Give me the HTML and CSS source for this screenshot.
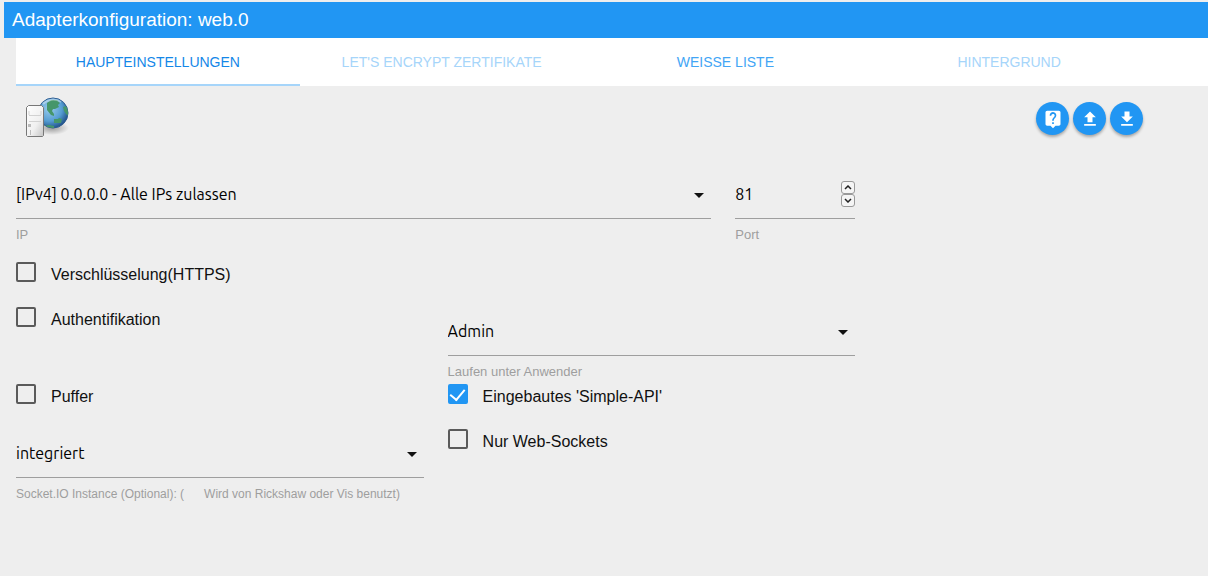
FILE: index.html
```
<!DOCTYPE html>
<html lang="de">
<head>
  <meta charset="UTF-8">
  <meta name="viewport" content="width=device-width, initial-scale=1.0">
  <title>Adapterkonfiguration: web.0</title>
  <link rel="stylesheet" href="styles.css">
</head>
<body>
  <header class="title-bar">
    <h1>Adapterkonfiguration: web.0</h1>
  </header>
  <nav class="tabs">
    <a class="tab active" href="#main">Haupteinstellungen</a>
    <a class="tab disabled" href="#le">Let's Encrypt Zertifikate</a>
    <a class="tab" href="#whitelist">Weisse Liste</a>
    <a class="tab disabled" href="#background">Hintergrund</a>
  </nav>
  <main class="page" id="main">
    <div class="toolbar">
      <svg class="logo" viewBox="0 0 48 48" width="48" height="48" role="img" aria-label="web">
        <defs>
          <radialGradient id="sea" cx="38%" cy="35%" r="70%">
            <stop offset="0" stop-color="#9accec"/>
            <stop offset="0.6" stop-color="#559dd2"/>
            <stop offset="1" stop-color="#1d4c85"/>
          </radialGradient>
          <radialGradient id="shade">
            <stop offset="0" stop-color="#000" stop-opacity="0.35"/>
            <stop offset="1" stop-color="#000" stop-opacity="0"/>
          </radialGradient>
          <linearGradient id="case" x1="0" y1="0" x2="1" y2="1">
            <stop offset="0" stop-color="#fff"/>
            <stop offset="0.6" stop-color="#f0f0f0"/>
            <stop offset="1" stop-color="#c4c4c4"/>
          </linearGradient>
          <clipPath id="globe"><circle cx="29" cy="18" r="15"/></clipPath>
        </defs>
        <ellipse cx="28" cy="33" rx="17" ry="7" fill="url(#shade)"/>
        <circle cx="29" cy="18" r="15" fill="url(#sea)" stroke="#2b5a90"/>
        <g clip-path="url(#globe)" fill="#46966a">
          <path d="M23 8l4-3 6 0 3 3-2 2 1 2-4 2-2 0-1 2 2 3 0 2-3-1-4-5z"/>
          <path d="M39 12l3-1 3 6-1 4-2-2-2-3z"/>
          <path d="M30 26v-2l4 0 1-1 3 1-1 4-3 0-4 0z"/>
          <path d="M20 31l5-1 5 1 0 2-4 1z"/>
        </g>
        <path d="M19 9a14 14 0 0 1 18-2" fill="none" stroke="#fff" stroke-opacity="0.4" stroke-width="2"/>
        <path d="M2.500 12.500l2-2h13l2 2v28l-1 1h-15l-1-1z" fill="url(#case)" stroke="#777"/>
        <path d="M5 20.500h12M5 26.500h12M5 16v4M17 16v4" fill="none" stroke="#d2d2d2"/>
        <path d="M4 29h3v3H4zM6 35h1v5H6z" fill="#bcbcbc"/>
      </svg>
      <div class="actions">
        <button type="button" class="btn-round" aria-label="Hilfe">
          <svg viewBox="0 0 24 24" width="20" height="20"><path fill="#fff" d="M19 2H5a2 2 0 0 0-2 2v14c0 1.100.9 2 2 2h4l3 3 3-3h4c1.100 0 2-.9 2-2V4a2 2 0 0 0-2-2zm-6 16h-2v-2h2v2zm2.070-7.750l-.9.920C13.450 11.900 13 12.500 13 14h-2v-.5c0-1.100.450-2.100 1.170-2.830l1.240-1.260A2 2 0 1 0 10 8H8a4 4 0 1 1 7.070 2.250z"/></svg>
        </button>
        <button type="button" class="btn-round" aria-label="Hochladen">
          <svg viewBox="0 0 24 24" width="20" height="20"><path fill="#fff" d="M9 16h6v-6h4l-7-7-7 7h4zM5 18h14v2H5z"/></svg>
        </button>
        <button type="button" class="btn-round" aria-label="Herunterladen">
          <svg viewBox="0 0 24 24" width="20" height="20"><path fill="#fff" d="M19 9h-4V3H9v6H5l7 7 7-7zM5 18v2h14v-2z"/></svg>
        </button>
      </div>
    </div>

    <form class="form">
      <div class="field ip">
        <div class="control">
          <select id="bind"><option>[IPv4] 0.0.0.0 - Alle IPs zulassen</option></select>
          <svg class="caret" viewBox="0 0 10 5" width="10" height="5"><path d="M0 0h10L5 5z"/></svg>
        </div>
        <label for="bind">IP</label>
      </div>
      <div class="field port">
        <div class="control">
          <input type="number" id="port" value="81">
          <div class="spinner">
            <button type="button" aria-label="Mehr"><svg viewBox="0 0 8 5" width="8" height="5"><path d="M1 4l3-3 3 3"/></svg></button>
            <button type="button" aria-label="Weniger"><svg viewBox="0 0 8 5" width="8" height="5"><path d="M1 1l3 3 3-3"/></svg></button>
          </div>
        </div>
        <label for="port">Port</label>
      </div>

      <label class="check full"><input type="checkbox"><span>Verschlüsselung(HTTPS)</span></label>

      <label class="check half"><input type="checkbox"><span>Authentifikation</span></label>
      <div class="field half">
        <div class="control">
          <select id="defaultUser"><option>Admin</option></select>
          <svg class="caret" viewBox="0 0 10 5" width="10" height="5"><path d="M0 0h10L5 5z"/></svg>
        </div>
        <label for="defaultUser">Laufen unter Anwender</label>
      </div>

      <label class="check half tight"><input type="checkbox"><span>Puffer</span></label>
      <label class="check half tight"><input type="checkbox" checked><span>Eingebautes 'Simple-API'</span></label>

      <div class="field half">
        <div class="control">
          <select id="socketio"><option>integriert</option></select>
          <svg class="caret" viewBox="0 0 10 5" width="10" height="5"><path d="M0 0h10L5 5z"/></svg>
        </div>
        <label for="socketio" class="small"><span>Socket.IO Instance (Optional): (</span><span>Wird von Rickshaw oder Vis benutzt)</span></label>
      </div>
      <label class="check half"><input type="checkbox"><span>Nur Web-Sockets</span></label>
    </form>
  </main>
</body>
</html>
```
FILE: styles.css
```
* {
  box-sizing: border-box;
}
body {
  margin: 0;
  padding-top: 2px;
  min-height: 100vh;
  background: #eee;
  color: #111;
  font-family: "Liberation Sans", Arial, sans-serif;
  font-size: 16px;
}
.title-bar {
  margin-left: 4px;
  padding: 0 8px;
  background: #2196f3;
}
.title-bar h1 {
  margin: 0;
  color: #fff;
  font-size: 19px;
  font-weight: 400;
  line-height: 36px;
}

/* tabs */
.tabs {
  display: flex;
  margin-left: 16px;
  padding-right: 57px;
  background: #fff;
}
.tab {
  flex: 1;
  height: 48px;
  color: #42a5f5;
  font-size: 14px;
  line-height: 48px;
  text-align: center;
  text-decoration: none;
  text-transform: uppercase;
}
.tab.active {
  color: #1487e8;
  border-bottom: 2px solid #a6d5fa;
}
.tab.disabled {
  color: #a6d5fa;
}

.page {
  padding: 0 58px 0 16px;
}
.toolbar {
  display: flex;
  justify-content: space-between;
  padding: 9px 7px 16px 8px;
}
.logo {
  display: block;
}
.actions {
  display: flex;
  gap: 4px;
  padding-top: 7px;
}
.btn-round {
  display: flex;
  align-items: center;
  justify-content: center;
  width: 33px;
  height: 33px;
  padding: 0;
  border: none;
  border-radius: 50%;
  background: #2196f3;
  box-shadow: 0 2px 3px rgba(0,0,0,0.3);
  cursor: pointer;
}

/* settings */
.form {
  display: grid;
  grid-template-columns: repeat(12, 1fr);
  column-gap: 24px;
  width: 74%;
}
.full {
  grid-column: span 12;
}
.half {
  grid-column: span 6;
}
.ip {
  grid-column: span 10;
  margin-bottom: 8px;
}
.port {
  grid-column: span 2;
}
.field {
  padding-top: 12px;
}
.control {
  display: flex;
  align-items: center;
  position: relative;
  height: 48px;
  border-bottom: 1px solid #9e9e9e;
}
.control select,
.control input {
  flex: 1;
  min-width: 0;
  height: 47px;
  padding: 0 0 2px;
  border: none;
  outline: none;
  background: transparent;
  appearance: none;
  color: #000;
  font-family: Ubuntu, "Noto Sans", sans-serif;
  font-size: 16px;
}
.control input {
  appearance: textfield;
}
.caret {
  position: absolute;
  top: 22px;
  right: 7px;
  pointer-events: none;
  fill: #111;
}
.spinner {
  display: flex;
  flex-direction: column;
  padding-bottom: 2px;
}
.spinner button {
  display: flex;
  align-items: center;
  justify-content: center;
  width: 14px;
  height: 13px;
  padding: 0;
  border: 1px solid #999;
  border-radius: 3px;
  background: #f5f5f5;
}
.spinner path {
  fill: none;
  stroke: #222;
  stroke-width: 1.5;
}
.field label {
  display: block;
  margin-top: 8px;
  color: #9e9e9e;
  font-size: 13px;
  line-height: 16px;
}
.field label.small {
  display: flex;
  gap: 20px;
  font-size: 12px;
}
.check {
  display: flex;
  gap: 15px;
  padding: 11px 0 14px;
  line-height: 26px;
}
.check span {
  height: 20px;
}
.check.tight {
  padding-top: 4px;
}
.check input {
  display: flex;
  justify-content: center;
  flex: none;
  width: 20px;
  height: 20px;
  margin: 0;
  border: 2px solid #5a5a5a;
  border-radius: 2px;
  appearance: none;
}
.check input:checked {
  border-color: #2196f3;
  background: #2196f3;
}
.check input:checked::before {
  content: "";
  width: 7px;
  height: 12px;
  border: solid #fff;
  border-width: 0 2px 2px 0;
  transform: rotate(40deg);
}
@media (max-width: 700px) {
  .form {
    width: 100%;
  }
}
```
